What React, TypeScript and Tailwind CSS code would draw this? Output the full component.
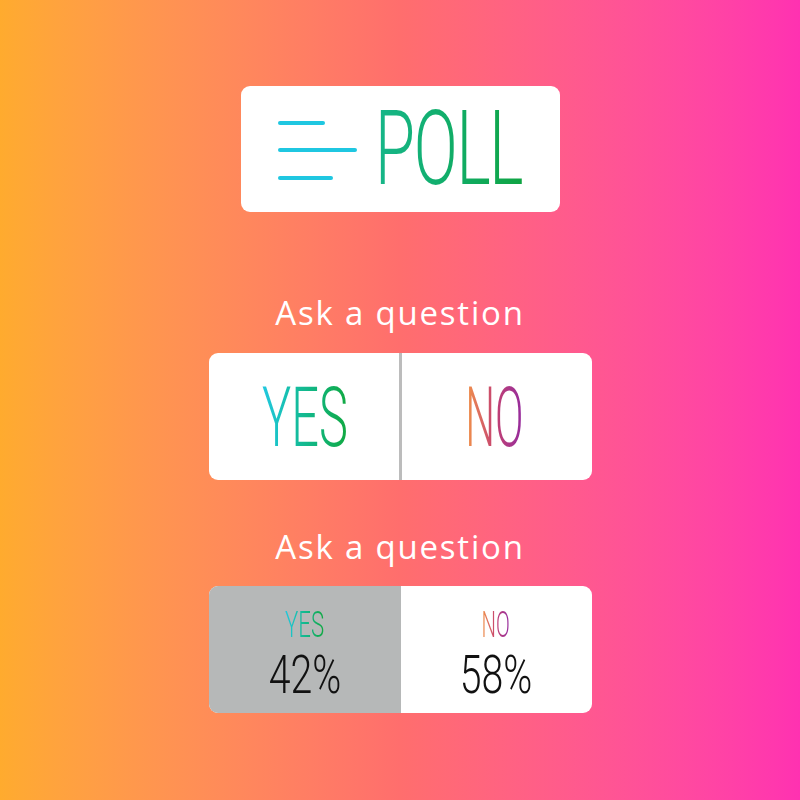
import React from 'react';

const condensed = { fontFamily: 'Roboto, "Liberation Sans", sans-serif' };
const askFont = { fontFamily: '"Open Sans", sans-serif' };

function MenuIcon() {
  return (
    <svg width="82" height="64" viewBox="0 0 82 64" className="shrink-0">
      <g stroke="#1fc7e1" strokeWidth="4" strokeLinecap="round">
        <line x1="3" y1="5" x2="46" y2="5" />
        <line x1="3" y1="32" x2="78" y2="32" />
        <line x1="3" y1="60" x2="54" y2="60" />
      </g>
    </svg>
  );
}

function Gradient({ children, className }: { children: React.ReactNode; className: string }) {
  return (
    <span className={`inline-block bg-clip-text text-transparent font-light leading-[1.15] ${className}`} style={condensed}>
      {children}
    </span>
  );
}

export default function App() {
  return (
    <div className="w-[800px] h-[800px] bg-linear-to-r from-[#ffab2e] via-[#ff6e6d] to-[#ff31b1] flex flex-col items-center pt-[86px]">
      {/* poll sticker */}
      <div className="w-[319px] h-[126px] bg-white rounded-[9px] flex items-center pl-[36px] pt-[1px]">
        <MenuIcon />
        <Gradient className="ml-[16px] text-[103px] tracking-[-2px] scale-x-[0.63] origin-left bg-linear-to-r from-[#17b68a] to-[#0fa442]">
          POLL
        </Gradient>
      </div>

      <div className="mt-[76px] text-white text-[33px] tracking-[1.8px]" style={askFont}>
        Ask a question
      </div>

      {/* yes / no */}
      <div className="mt-[15px] w-[383px] h-[127px] bg-white rounded-[9px] flex overflow-hidden">
        <div className="w-[190px] flex items-center justify-center pt-[5px] pl-[2px]">
          <Gradient className="text-[84px] scale-x-[0.58] bg-linear-to-r from-[#22c8e0] via-[#13b98e] to-[#12a83e]">YES</Gradient>
        </div>
        <div className="w-[3px] bg-[#bcbcbc]" />
        <div className="flex-1 flex items-center justify-center pt-[5px] pr-[4px]">
          <Gradient className="text-[84px] scale-x-[0.5] bg-linear-to-r from-[#f39440] via-[#c5406e] to-[#93279f]">NO</Gradient>
        </div>
      </div>

      <div className="mt-[42px] text-white text-[33px] tracking-[1.8px]" style={askFont}>
        Ask a question
      </div>

      {/* results */}
      <div className="mt-[15px] w-[383px] h-[127px] bg-white rounded-[9px] flex overflow-hidden">
        <div className="w-[192px] bg-[#b6b8b8] flex flex-col items-center pt-[18px]">
          <Gradient className="text-[37px] scale-x-[0.6] bg-linear-to-r from-[#22c8e0] via-[#13b98e] to-[#12a83e]">YES</Gradient>
          <span className="mt-[-2px] text-[53px] font-light leading-[1.15] text-[#111] scale-x-[0.74] inline-block" style={condensed}>42%</span>
        </div>
        <div className="flex-1 flex flex-col items-center pt-[18px]">
          <Gradient className="text-[37px] scale-x-[0.55] bg-linear-to-r from-[#f39440] via-[#c5406e] to-[#93279f]">NO</Gradient>
          <span className="mt-[-2px] text-[53px] font-light leading-[1.15] text-[#111] scale-x-[0.74] inline-block" style={condensed}>58%</span>
        </div>
      </div>
    </div>
  );
}
